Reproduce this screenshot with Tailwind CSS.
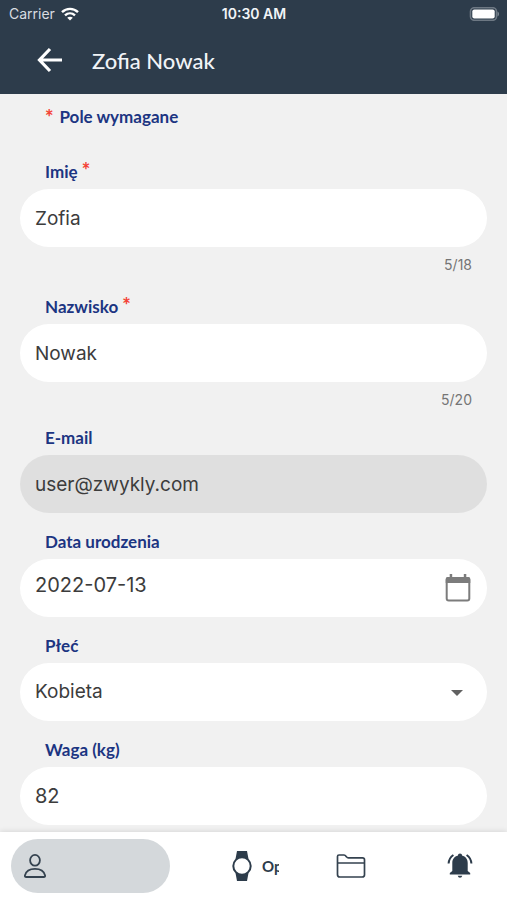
<!DOCTYPE html>
<html lang="pl">
<head>
<meta charset="utf-8">
<meta name="viewport" content="width=device-width, initial-scale=1">
<title>Zofia Nowak</title>
<script src="https://cdn.jsdelivr.net/npm/@tailwindcss/browser@4"></script>
</head>
<body class="flex h-screen flex-col overflow-hidden bg-[#f1f1f1] font-['Inter',sans-serif] text-[#3c3c3c]">
  <header class="shrink-0 bg-[#2d3c4b] text-white">
    <div class="grid h-7 grid-cols-3 items-center pl-[9px] pr-2 text-sm">
      <div class="flex items-center gap-[6px] text-[#d9dde1]">
        <span>Carrier</span>
        <svg class="h-[14px] w-[18px]" viewBox="0 0 18 14" fill="none" stroke="#fff" stroke-width="2.4" aria-hidden="true">
          <path d="M1 5.2C5.500 .8 12.500 .8 17 5.200M4 8.400c2.900-2.700 7.100-2.700 10 0"/>
          <path d="M9 13.500 6.200 10.700c1.600-1.400 4-1.400 5.600 0z" fill="#fff" stroke="none"/>
        </svg>
      </div>
      <span class="text-center font-semibold text-[#f1f4f7]">10:30 AM</span>
      <svg class="h-[14px] w-[30px] justify-self-end" viewBox="0 0 30 14" aria-hidden="true">
        <rect x="1.500" y=".7" width="26" height="12.600" rx="3.800" fill="none" stroke="#6d7883" stroke-width="1.600"/>
        <rect x="3.300" y="2.500" width="22.400" height="9" rx="2" fill="#fff"/>
        <path d="M28.500 4.500c2 .8 2 4.200 0 5z" fill="#7d8791"/>
      </svg>
    </div>
    <div class="flex h-[66px] items-center gap-7 pb-[2px] pl-9">
      <button type="button" aria-label="Wstecz" class="block">
        <svg class="h-7 w-7" viewBox="0 0 28 28" fill="none" stroke="#fff" stroke-width="3.200" aria-hidden="true">
          <path d="M14 3 3.500 14 14 25M3.500 14H26"/>
        </svg>
      </button>
      <h1 class="font-['Lato',sans-serif] text-[22px] font-medium text-[#f1f4f7]">Zofia Nowak</h1>
    </div>
  </header>

  <main class="min-h-0 flex-1 overflow-hidden px-5">
    <p class="flex items-center gap-[6px] pl-[25px] pt-[11px] font-['Lato',sans-serif] text-[17px] font-bold leading-6 text-[#1c3582]"><span class="text-xl font-black leading-6 text-[#f44336]">*</span>Pole wymagane</p>
    <form class="mt-[27px] flex flex-col gap-[17px] text-[19px]">
      <div>
        <label for="imie" class="mb-[5px] block h-7 pl-[25px] pt-1 font-['Lato',sans-serif] text-[17px] font-bold leading-6 text-[#1c3582]">Imię <span class="text-xl font-black leading-none text-[#f44336]">*</span></label>
        <input id="imie" type="text" value="Zofia" maxlength="18" class="block h-[58px] w-full rounded-full bg-white px-[15px] outline-none">
        <p class="pr-[15px] pt-[9px] text-right text-sm leading-[18px] text-[#757575]">5/18</p>
      </div>
      <div>
        <label for="nazwisko" class="mb-[5px] block h-7 pl-[25px] pt-1 font-['Lato',sans-serif] text-[17px] font-bold leading-6 text-[#1c3582]">Nazwisko <span class="text-xl font-black leading-none text-[#f44336]">*</span></label>
        <input id="nazwisko" type="text" value="Nowak" maxlength="20" class="block h-[58px] w-full rounded-full bg-white px-[15px] outline-none">
        <p class="pr-[15px] pt-[9px] text-right text-sm leading-[18px] text-[#757575]">5/20</p>
      </div>
      <div>
        <label for="email" class="mb-[5px] block pl-[25px] font-['Lato',sans-serif] text-[17px] font-bold leading-6 text-[#1c3582]">E-mail</label>
        <input id="email" type="email" value="user@zwykly.com" readonly class="block h-[58px] w-full rounded-full bg-[#dfdfdf] px-[15px] outline-none">
      </div>
      <div>
        <label for="data" class="mb-[5px] block pl-[25px] font-['Lato',sans-serif] text-[17px] font-bold leading-6 text-[#1c3582]">Data urodzenia</label>
        <div class="flex h-[58px] items-center rounded-full bg-white pl-[15px] pr-4">
          <input id="data" type="text" value="2022-07-13" class="h-full min-w-0 flex-1 bg-transparent pb-[6px] text-xl outline-none">
          <button type="button" aria-label="Wybierz datę" class="block">
            <svg class="h-7 w-[26px]" viewBox="0 0 26 28" aria-hidden="true">
              <rect x="1.700" y="4" width="22.600" height="22.500" rx="2" fill="none" stroke="#7c7c7c" stroke-width="2"/>
              <path d="M.7 9V5q0-2 2-2h2V0h2.500v3h11.600V0h2.500v3h2q2 0 2 2v4z" fill="#7c7c7c"/>
            </svg>
          </button>
        </div>
      </div>
      <div>
        <label for="plec" class="mb-[5px] block pl-[25px] font-['Lato',sans-serif] text-[17px] font-bold leading-6 text-[#1c3582]">Płeć</label>
        <div class="relative">
          <select id="plec" class="block h-[58px] w-full appearance-none rounded-full bg-white px-[15px] outline-none">
            <option selected>Kobieta</option>
            <option>Mężczyzna</option>
          </select>
          <svg class="pointer-events-none absolute right-6 top-[27px] h-[6px] w-3" viewBox="0 0 12 6" fill="#616161" aria-hidden="true"><path d="M0 0h12L6 6z"/></svg>
        </div>
      </div>
      <div>
        <label for="waga" class="mb-[5px] block pl-[25px] font-['Lato',sans-serif] text-[17px] font-bold leading-6 text-[#1c3582]">Waga (kg)</label>
        <input id="waga" type="text" inputmode="numeric" value="82" class="block h-[58px] w-full rounded-full bg-white px-[15px] text-xl outline-none">
      </div>
    </form>
  </main>

  <nav class="flex h-[68px] shrink-0 items-center bg-white pl-[11px] pr-[34px] shadow-[0_-1px_5px_rgba(0,0,0,0.1)]">
    <a href="#profil" aria-label="Profil" class="flex h-[54px] w-[159px] items-center rounded-full bg-[#d4d8db] pl-3">
      <svg class="h-6 w-6" viewBox="0 0 24 24" fill="none" stroke="#34424f" stroke-width="1.800" aria-hidden="true">
        <ellipse cx="12" cy="6.300" rx="4.900" ry="5.400"/>
        <path d="M3.200 23h17.600q1.600 0 1.300-1.600C21 17.200 17 14.900 12 14.900S3 17.200 1.900 21.400Q1.600 23 3.200 23z"/>
      </svg>
    </a>
    <div class="flex flex-1 items-center justify-between pl-[62px]">
      <a href="#opaski" class="flex items-center gap-[10px]">
        <svg class="h-[30px] w-5" viewBox="0 0 20 30" aria-hidden="true">
          <path d="M5 0h10l1.500 8h-13zM5 30h10l1.500-8h-13z" fill="#2d3c4b"/>
          <circle cx="10" cy="15" r="8.700" fill="#fff" stroke="#2d3c4b" stroke-width="2"/>
        </svg>
        <span class="w-[17px] overflow-hidden whitespace-nowrap font-['Lato',sans-serif] text-[15px] font-bold text-[#2d3c4b]">Opaski</span>
      </a>
      <a href="#dokumenty" aria-label="Dokumenty" class="mr-6">
        <svg class="h-6 w-[30px]" viewBox="0 0 30 24" fill="none" stroke="#34424f" stroke-width="1.700" aria-hidden="true">
          <path d="M1.500 20.500V2.500Q1.500 1 3 1h5q1.200 0 2 1.200l.6.700q.6.900 1.800.9h14.100q2 0 2 2v14.900q0 2.300-2.300 2.300H3.800q-2.300 0-2.300-2.500zM1.500 9h27"/>
        </svg>
      </a>
      <a href="#powiadomienia" aria-label="Powiadomienia">
        <svg class="h-[26px] w-[26px]" viewBox="0 0 26 26" fill="#2d3c4b" aria-hidden="true">
          <path d="M11 2.600V2q0-1.500 2-1.500T15 2v.6c3.700.9 5.700 3.700 5.700 7.400v8l2.500 2v1.500H2.800V20l2.500-2v-8c0-3.700 2-6.500 5.700-7.400zM10.700 22.700h4.600q-.5 2-2.300 2t-2.300-2z"/>
          <path d="M1.600 10.500C1.800 6.800 3.500 4 6.400 2M24.400 10.500c-.2-3.700-1.900-6.500-4.800-8.500" fill="none" stroke="#2d3c4b" stroke-width="2"/>
        </svg>
      </a>
    </div>
  </nav>
</body>
</html>
